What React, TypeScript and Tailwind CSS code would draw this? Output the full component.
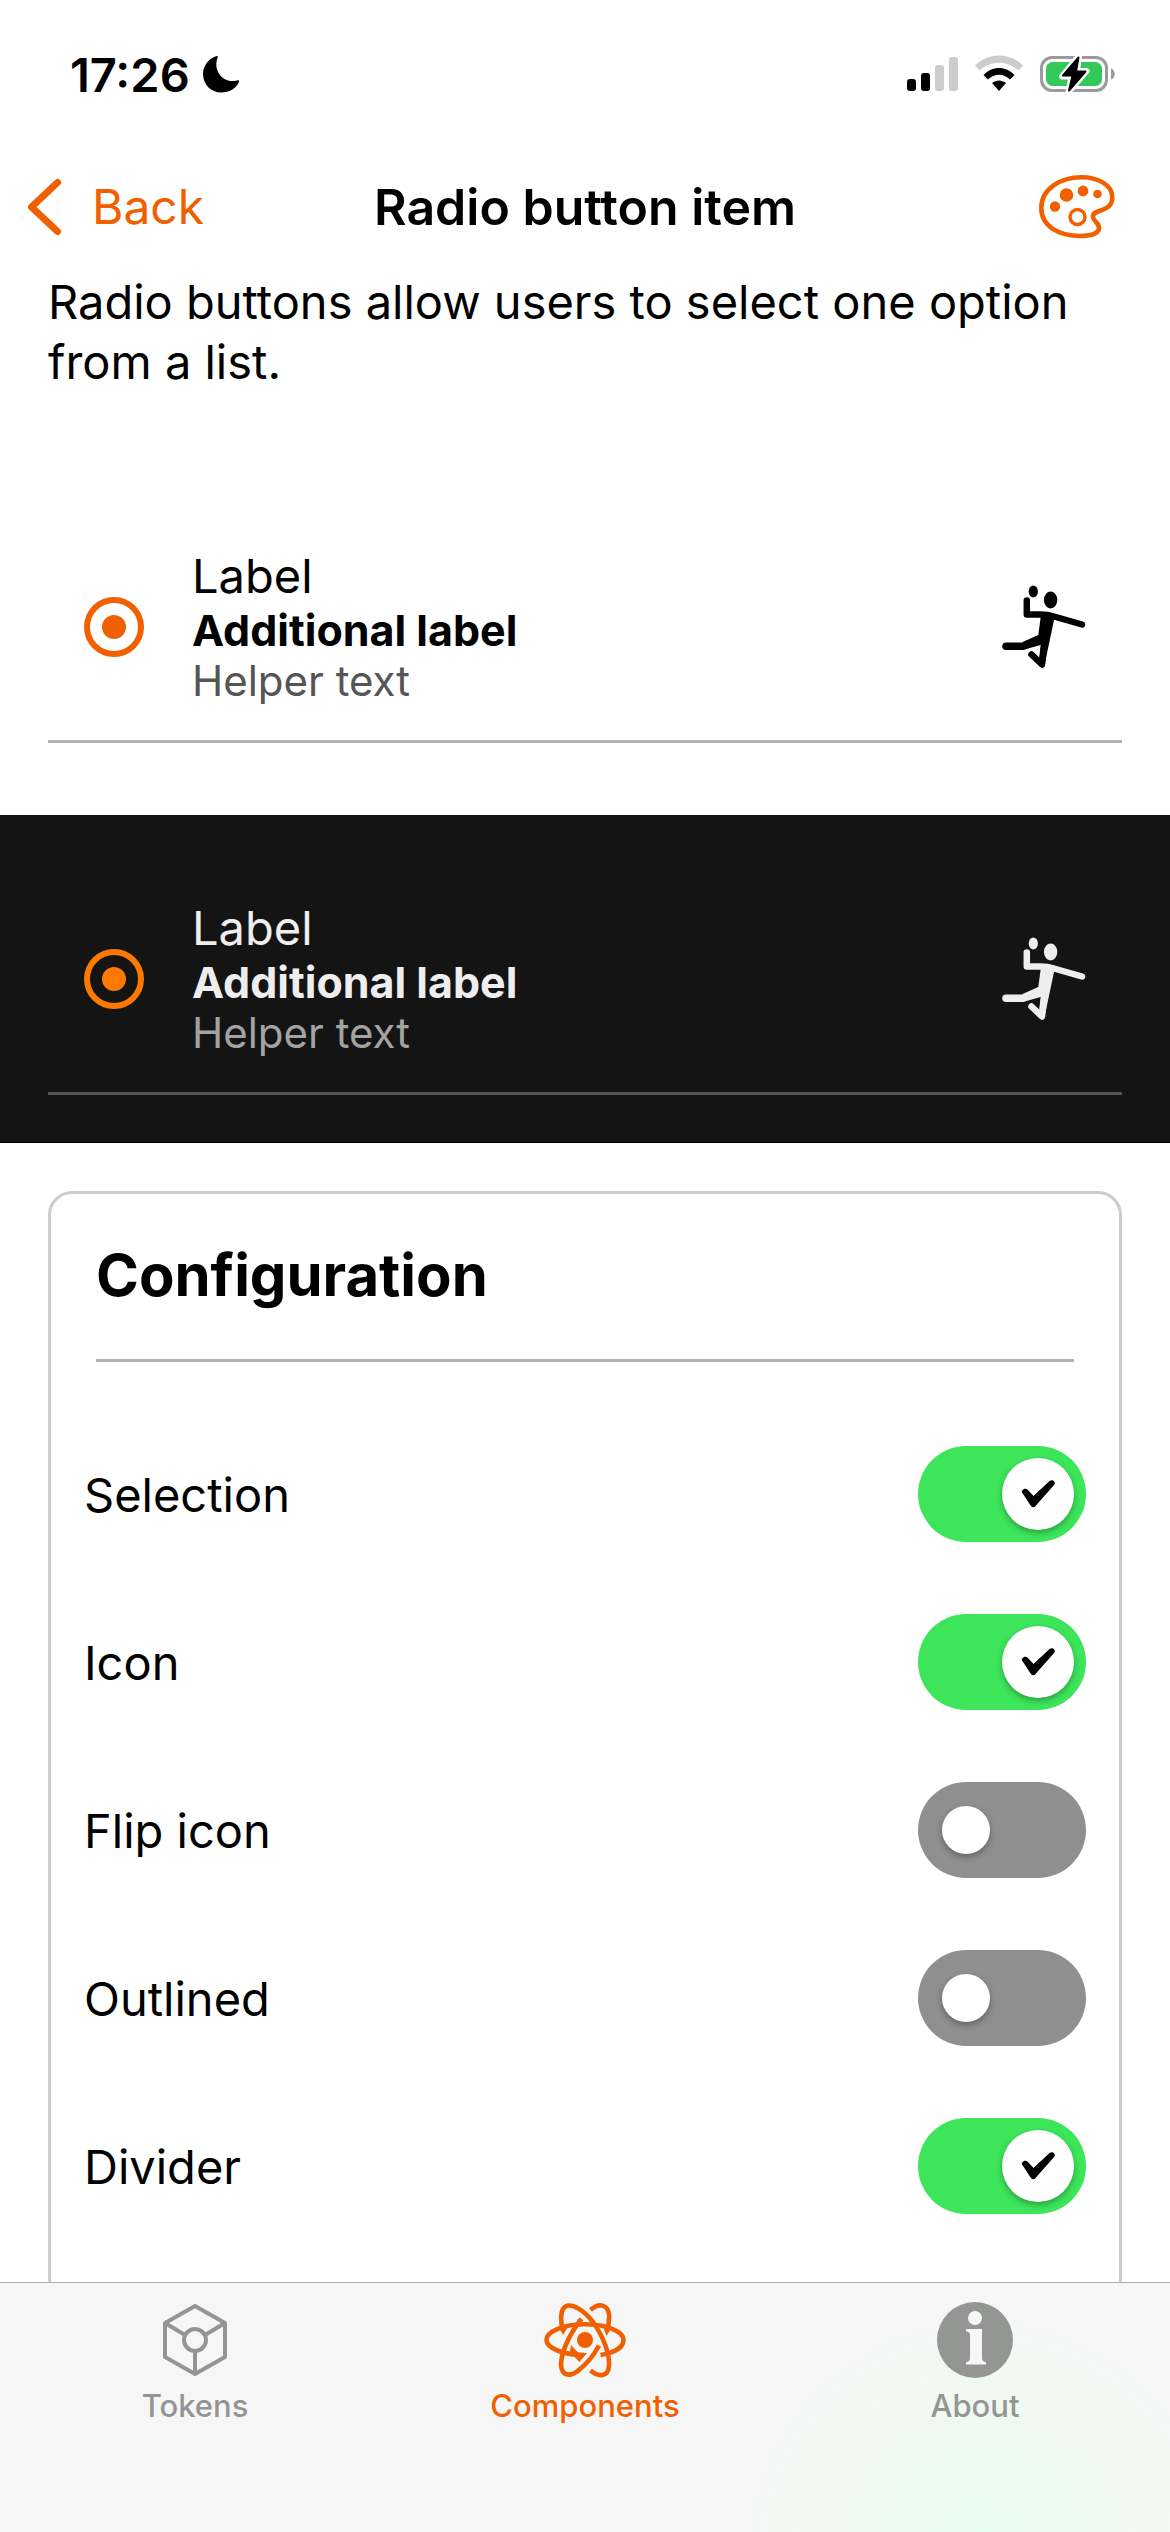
import { useState } from "react";

function StatusBar() {
  return (
    <div className="flex h-[150px] items-center justify-between pb-0.5 pl-[70px] pr-[54px]">
      <div className="flex items-center gap-3 text-[47px] font-semibold leading-none">
        <span>17:26</span>
        <svg width="38" height="38" viewBox="0 0 38 38" aria-hidden="true">
          <path d="M14 1.2C15.3.4 16.2 1.4 15.5 3C11 14.500 20 29 35 25.500C36.800 25 37.500 25.800 37 27C34 33.500 27 37.500 19.500 37.500C9 37.500 1 29.500 1 19C1 11 6 4 14 1.200Z" />
        </svg>
      </div>
      <div className="flex items-center gap-4">
        <svg width="52" height="38" viewBox="0 0 52 38" aria-hidden="true">
          <rect x="1" y="24" width="9" height="12" rx="3" />
          <rect x="15" y="18" width="9" height="18" rx="3" />
          <rect x="29" y="10" width="9" height="26" rx="3" fill="#ccc" />
          <rect x="43" y="2" width="9" height="34" rx="3" fill="#ccc" />
        </svg>
        <svg width="50" height="38" viewBox="0 0 50 38" aria-hidden="true">
          <path d="M1 10.500C14-3 36-3 49 10.500L44.500 15.500C33 5 17 5 5.500 15.500Z" fill="#ccc" />
          <path d="M9.500 20C18 10.500 32 10.500 40.500 20L36 24.500C29.500 18 20.500 18 14 24.500Z" />
          <path d="M18 28C22 24.500 28 24.500 32 28L25 36Z" />
        </svg>
        <svg width="76" height="38" viewBox="0 0 76 38" aria-hidden="true">
          <rect x="1.500" y="2.500" width="65" height="33" rx="10.500" fill="none" stroke="#9a9a9a" strokeWidth="3" />
          <path d="M71 13.500C76 15 76 23 71 24.500Z" fill="#9a9a9a" />
          <rect x="6" y="7" width="56" height="24" rx="6.500" fill="#34c759" />
          <path d="M39 1L22 21.500H31.500L28.500 37L46.500 16H37Z" stroke="#fff" strokeWidth="6" strokeLinejoin="round" />
          <path d="M38.500 2.500L23 20.500H32.500L29 35.500L45.500 16.500H36Z" stroke="#000" strokeWidth="2" strokeLinejoin="round" />
        </svg>
      </div>
    </div>
  );
}

function NavBar() {
  return (
    <header className="grid h-[114px] grid-cols-[1fr_auto_1fr] items-center px-[26px]">
      <button className="flex items-center gap-[30px] justify-self-start text-[48px] leading-none text-[#f16000]">
        <svg width="36" height="58" viewBox="0 0 36 58" fill="none" stroke="currentColor" strokeWidth="7" strokeLinecap="round" strokeLinejoin="round" aria-hidden="true">
          <path d="M31.500 4.500L5.500 29L31.500 53.500" />
        </svg>
        <span>Back</span>
      </button>
      <h1 className="text-[50px] font-semibold leading-none">Radio button item</h1>
      <button aria-label="Theme" className="mr-7 justify-self-end">
        <svg width="78" height="66" viewBox="0 0 78 66" fill="none" stroke="#f16000" aria-hidden="true">
          <path strokeWidth="4.600" d="M43.500 3.300C60 3.300 74.300 11 74.300 23C74.300 40 54 34 55 43C55.500 48 62 49 61 55C59.500 60 52 62 42 62C22 62 3.300 53 3.300 34C3.300 15 22 3.300 43.500 3.300Z" />
          <circle cx="39.500" cy="43" r="7.500" strokeWidth="3.400" />
          <g fill="#f16000" stroke="none">
            <circle cx="17" cy="32.500" r="5.200" />
            <circle cx="28.500" cy="21" r="6.800" />
            <circle cx="45" cy="17" r="5.400" />
            <circle cx="59.500" cy="20" r="4.300" />
          </g>
        </svg>
      </button>
    </header>
  );
}

function HandballIcon() {
  return (
    <svg width="84" height="84" viewBox="0 0 84 84" fill="currentColor" stroke="currentColor" aria-hidden="true">
      <ellipse cx="31.300" cy="6.500" rx="4.600" ry="6" stroke="none" />
      <ellipse cx="48.600" cy="15" rx="6.700" ry="8.400" stroke="none" />
      <path d="M24.800 15.500V29.600H38Q46 29.600 52 31.500L80 39.500" fill="none" strokeWidth="6.500" strokeLinecap="round" strokeLinejoin="round" />
      <path d="M38.700 32L36.300 50L20.700 57V65L38.700 60L37.300 72L42.300 81L52 35V31Z" stroke="none" />
      <path d="M4 61.300H20.700L37 55" fill="none" strokeWidth="7.600" strokeLinecap="round" />
      <path d="M29.500 69.500L40 79.500L42 62" fill="none" strokeWidth="6.500" strokeLinecap="round" strokeLinejoin="round" />
    </svg>
  );
}

type RadioItemProps = { name: string; tone: string; helper: string; line: string; accent: string };

function RadioItem({ name, tone, helper, line, accent }: RadioItemProps) {
  return (
    <div className={`mx-12 border-b-[3px] ${line}`}>
      <label className={`flex h-[226px] items-center px-9 ${tone}`}>
        <input type="radio" name={name} defaultChecked className={`grid size-[60px] shrink-0 appearance-none place-items-center rounded-full border-[6px] before:size-6 before:rounded-full before:content-[''] ${accent}`} />
        <span className="ml-12 flex flex-1 flex-col">
          <span className="text-[47px] leading-[58px]">Label</span>
          <span className="text-[43px] font-bold leading-[50px]">Additional label</span>
          <span className={`text-[42px] leading-[52px] ${helper}`}>Helper text</span>
        </span>
        <HandballIcon />
      </label>
    </div>
  );
}

function Switch({ label, initial }: { label: string; initial: boolean }) {
  const [on, setOn] = useState(initial);
  return (
    <label className="flex h-[168px] items-center justify-between text-[47px] leading-none">
      <span>{label}</span>
      <span className={`relative flex h-24 w-[168px] items-center rounded-[48px] ${on ? "justify-end bg-[#3de55b] pr-3" : "bg-[#8f8f8f] pl-6"}`}>
        <input type="checkbox" role="switch" checked={on} onChange={() => setOn(!on)} className="absolute inset-0 appearance-none" />
        <span className={`grid place-items-center rounded-full bg-white shadow-[0_3px_6px_rgba(0,0,0,0.3)] ${on ? "size-[72px]" : "size-12"}`}>
          {on && (
            <svg width="36" height="30" viewBox="0 0 36 30" aria-hidden="true">
              <path d="M2 13.500C1 11 5 8.500 7.500 10.500L13.500 17L29.500 2C32 0 36 2 34.500 5.500L15.500 27C14.300 28.800 12.500 28.800 11 27Z" />
            </svg>
          )}
        </span>
      </span>
    </label>
  );
}

const options = [
  { label: "Selection", on: true },
  { label: "Icon", on: true },
  { label: "Flip icon", on: false },
  { label: "Outlined", on: false },
  { label: "Divider", on: true },
];

function TokensIcon() {
  return (
    <svg width="66" height="76" viewBox="0 0 66 76" fill="none" stroke="currentColor" strokeWidth="4" strokeLinejoin="round" aria-hidden="true">
      <path d="M33 4L63 21V55L33 72L3 55V21Z" />
      <circle cx="33" cy="38" r="11" />
      <path d="M3 21L23 33M63 21L43 33M33 49V72" />
    </svg>
  );
}

function AtomIcon() {
  return (
    <svg width="84" height="76" viewBox="0 0 84 76" fill="none" stroke="currentColor" strokeWidth="4.600" aria-hidden="true">
      <circle cx="42" cy="38" r="8" fill="currentColor" stroke="none" />
      <path d="M57.500 53C72 50.500 80.500 45 80.500 38C80.500 29 63 22.300 42 22.300C21 22.300 3.500 29 3.500 38C3.500 46 20 53 41 53" />
      <path d="M20 29C17 18 17.500 7.500 22.500 4.500C29 1 41 8 50 20C60 34 67 52 66 64C65 75 56 75.500 47.500 68.500" />
      <path d="M47.500 8C56 .5 64.500 2.500 66 12C66.500 17 65.500 23 64 29" />
      <path d="M37 19C25 34 18 52 18 63C19 75 28 75 36.500 67.500C44 61.500 51 53 56 43.500" />
      <path d="M17 27L24.500 26L20 33ZM60.500 26L67 28L63.700 34ZM34 18L37 15.500L40.500 18.500L37 22ZM28 43L35.500 51H44L36.300 60L27 50Z" fill="currentColor" stroke="none" />
    </svg>
  );
}

function AboutIcon() {
  return (
    <svg width="76" height="76" viewBox="0 0 76 76" aria-hidden="true">
      <circle cx="38" cy="38" r="38" fill="currentColor" />
      <circle cx="38" cy="16" r="7" fill="#f6f7f6" />
      <path d="M29 27H45V56Q45 60 49 60V62.500H29V60Q33 60 33 56V33Q33 29.500 29 29.500Z" fill="#f6f7f6" />
    </svg>
  );
}

const tabs = [
  { label: "Tokens", icon: <TokensIcon />, tone: "text-[#949494]" },
  { label: "Components", icon: <AtomIcon />, tone: "text-[#f16000]" },
  { label: "About", icon: <AboutIcon />, tone: "text-[#949694]" },
];

export default function App() {
  return (
    <div className="flex h-screen flex-col overflow-hidden bg-white font-['Inter',sans-serif] text-black">
      <StatusBar />
      <NavBar />
      <main className="min-h-0 flex-1 overflow-hidden">
        <p className="px-12 pt-2 text-[47px] leading-[60px]">
          Radio buttons allow users to select one option from a list.
        </p>
        <section className="pt-[122px] pb-[72px]">
          <RadioItem name="light" tone="text-black" helper="text-[#555]" line="border-[#b3b3b3]" accent="border-[#f16000] before:bg-[#f16000]" />
        </section>
        <section className="border-b border-black bg-[#141414] pt-[51px] pb-[47px]">
          <RadioItem name="dark" tone="text-[#eee]" helper="text-[#a3a3a3]" line="border-[#555]" accent="border-[#ff7900] before:bg-[#ff7900]" />
        </section>
        <section className="mx-12 mt-12 rounded-3xl border-[3px] border-[#ccc] px-[33px] pb-12">
          <div className="mx-3 border-b-[3px] border-[#b3b3b3]">
            <h2 className="flex h-[165px] items-center pb-1 text-[58px] font-bold leading-none">Configuration</h2>
          </div>
          <div className="pt-12">
            {options.map((o) => (
              <Switch key={o.label} label={o.label} initial={o.on} />
            ))}
          </div>
        </section>
      </main>
      <nav className="grid h-[250px] shrink-0 grid-cols-3 items-start border-t border-[#adadad] bg-[#f6f6f6] bg-[radial-gradient(circle_at_84%_110%,#e7fdec_0%,#f6f6f6_25%)] pt-[19px]">
        {tabs.map((t) => (
          <button key={t.label} className={`flex flex-col items-center gap-2.5 text-[31px] font-medium leading-9 ${t.tone}`}>
            {t.icon}
            <span>{t.label}</span>
          </button>
        ))}
      </nav>
    </div>
  );
}
